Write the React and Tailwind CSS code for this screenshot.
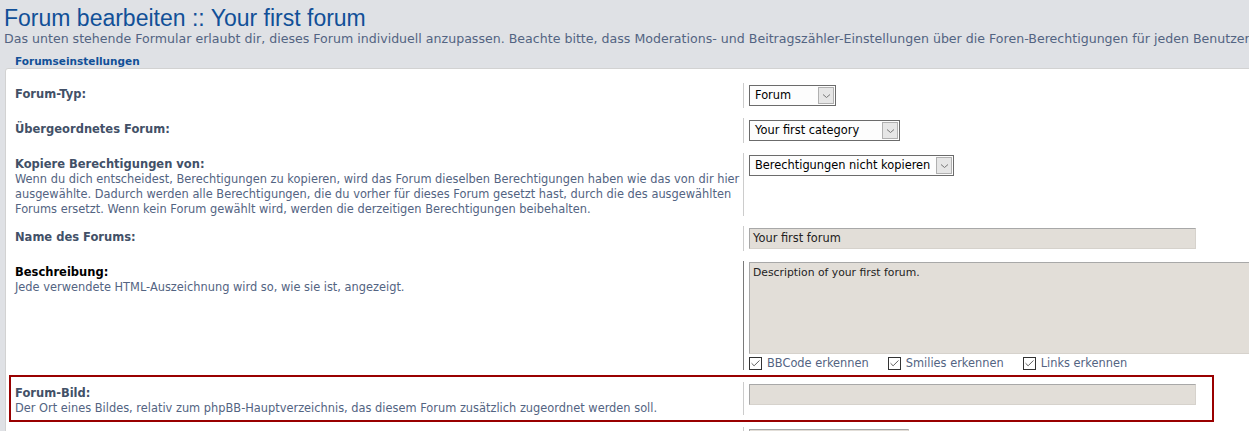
import { Check } from 'lucide-react'

function Chevron() {
  return (
    <svg width="9" height="6" viewBox="0 0 9 6" fill="none">
      <path d="M1 1.5 L4.5 4.5 L8 1.5" stroke="#777" strokeWidth="1" />
    </svg>
  )
}

function Select({ value, width }) {
  return (
    <div className={`flex h-[21px] items-stretch border border-[#6b6b6b] bg-[#fdfdfd] ${width}`}>
      <span className="flex-1 pl-[5px] text-[11.4px] leading-[19px] text-black whitespace-nowrap">{value}</span>
      <span className="m-px flex w-[16px] items-center justify-center border border-[#b0b0b0] bg-[#e6e6e6]">
        <Chevron />
      </span>
    </div>
  )
}

function TextInput({ value, width }) {
  return (
    <div
      className={`h-[21px] border border-[#a8a8a8] border-r-[#d6d2cc] border-b-[#d6d2cc] bg-[#e2ded8] pl-[3px] text-[11.4px] leading-[19px] text-[#222] ${width}`}
    >
      {value}
    </div>
  )
}

function Checkbox({ label }) {
  return (
    <span className="flex items-center gap-[5px]">
      <span className="flex h-[13px] w-[13px] items-center justify-center border border-[#333] bg-white">
        <Check size={11} strokeWidth={1.6} color="#222" />
      </span>
      <span className="text-[11.4px] leading-[14px] text-[#536482]">{label}</span>
    </span>
  )
}

// one settings row: label column on the left, control column with a left rule
function Row({ label, explain, dark, ddLine = 'border-[#cccccc]', ddPad = 'py-[2px]', children }) {
  return (
    <div className="flex py-[5px]">
      <div className="-mb-px w-[728px] shrink-0 pt-[4px] leading-[15px]">
        {label && (
          <div className={`text-[11.5px] font-bold ${dark ? 'text-black' : 'text-[#425067]'}`}>{label}</div>
        )}
        {explain && <div className="text-[11.4px] text-[#536482]">{explain}</div>}
      </div>
      <div className={`border-l pl-[5px] ${ddPad} ${ddLine}`}>{children}</div>
    </div>
  )
}

export default function App() {
  return (
    <div className="h-[431px] w-full overflow-hidden bg-[#dfe1e5] font-['DejaVu_Sans',sans-serif]">
      <h1 className="mt-[5px] pl-[4px] font-['Liberation_Sans',sans-serif] text-[23px] leading-[26px] text-[#115098] whitespace-nowrap">
        Forum bearbeiten :: Your first forum
      </h1>
      <p className="pl-[4px] text-[12.6px] leading-[16px] text-[#536482] whitespace-nowrap">
        Das unten stehende Formular erlaubt dir, dieses Forum individuell anzupassen. Beachte bitte, dass Moderations- und Beitragszähler-Einstellungen über die Foren-Berechtigungen für jeden Benutzer
      </p>

      <div className="mt-[8px] pl-[15px] text-[10.5px] font-bold leading-[13px] text-[#115098]">Forumseinstellungen</div>

      <div className="ml-[5px] w-[1300px] rounded-tl-[3px] border border-[#d2d2d2] bg-white pt-[9px]">
        <div className="pl-[9px]">
          <Row label="Forum-Typ:">
            <Select value="Forum" width="w-[87px]" />
          </Row>
          <Row label="Übergeordnetes Forum:">
            <Select value="Your first category" width="w-[151px]" />
          </Row>
          <Row
            label="Kopiere Berechtigungen von:"
            explain="Wenn du dich entscheidest, Berechtigungen zu kopieren, wird das Forum dieselben Berechtigungen haben wie das von dir hier ausgewählte. Dadurch werden alle Berechtigungen, die du vorher für dieses Forum gesetzt hast, durch die des ausgewählten Forums ersetzt. Wenn kein Forum gewählt wird, werden die derzeitigen Berechtigungen beibehalten."
          >
            <Select value="Berechtigungen nicht kopieren" width="w-[205px]" />
          </Row>
          <Row label="Name des Forums:">
            <TextInput value="Your first forum" width="w-[447px]" />
          </Row>
          <Row
            label="Beschreibung:"
            dark
            ddLine="border-[#7a7a7a]"
            ddPad="pt-px"
            explain="Jede verwendete HTML-Auszeichnung wird so, wie sie ist, angezeigt."
          >
            <div className="h-[92px] w-[520px] border border-[#a8a8a8] border-r-[#d6d2cc] border-b-[#d6d2cc] bg-[#e2ded8] pl-[3px] pt-[4px] text-[10.8px] leading-[12px] text-[#222]">
              Description of your first forum.
            </div>
            <div className="mt-[2px] flex gap-[19px]">
              <Checkbox label="BBCode erkennen" />
              <Checkbox label="Smilies erkennen" />
              <Checkbox label="Links erkennen" />
            </div>
          </Row>
        </div>

        <div className="ml-[3px] w-[1205px] border-2 border-[#990000] pl-[4px]">
          <Row
            label="Forum-Bild:"
            explain="Der Ort eines Bildes, relativ zum phpBB-Hauptverzeichnis, das diesem Forum zusätzlich zugeordnet werden soll."
          >
            <TextInput value="" width="w-[447px]" />
          </Row>
        </div>

        <div className="pl-[9px]">
          <Row>
            <TextInput value="" width="w-[160px]" />
          </Row>
        </div>
      </div>
    </div>
  )
}
